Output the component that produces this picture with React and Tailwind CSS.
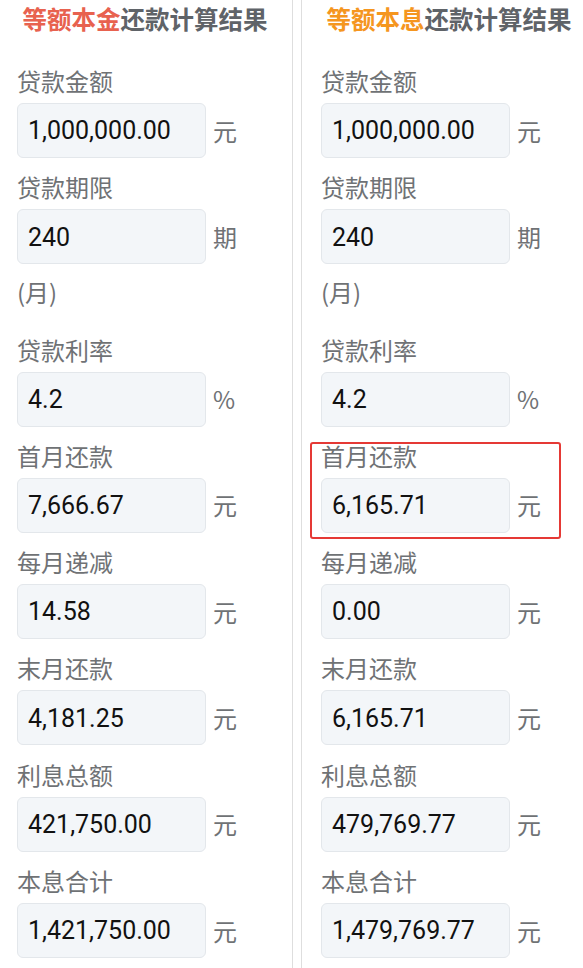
const left = {
  accent: "等额本金",
  color: "text-[#e8624f]",
  rows: [
    ["贷款金额", "1,000,000.00", "元"],
    ["贷款期限", "240", "期", "(月)"],
    ["贷款利率", "4.2", "%"],
    ["首月还款", "7,666.67", "元"],
    ["每月递减", "14.58", "元"],
    ["末月还款", "4,181.25", "元"],
    ["利息总额", "421,750.00", "元"],
    ["本息合计", "1,421,750.00", "元"],
  ],
};

const right = {
  accent: "等额本息",
  color: "text-[#f5961f]",
  highlight: "首月还款",
  rows: [
    ["贷款金额", "1,000,000.00", "元"],
    ["贷款期限", "240", "期", "(月)"],
    ["贷款利率", "4.2", "%"],
    ["首月还款", "6,165.71", "元"],
    ["每月递减", "0.00", "元"],
    ["末月还款", "6,165.71", "元"],
    ["利息总额", "479,769.77", "元"],
    ["本息合计", "1,479,769.77", "元"],
  ],
};

function Field({ label, value, unit, extra, highlight }) {
  return (
    <div className="relative pb-[14.3px]">
      {highlight && (
        <div className="absolute left-[-11px] top-[1px] w-[251px] h-[97px] border-2 border-[#e53935] rounded-[3px]" />
      )}
      <div className="h-[30px] leading-[30px] text-[24px] text-[#6f7275]">{label}</div>
      <div className="mt-[7px] flex items-center h-[55px]">
        <div className="w-[189px] h-[55px] flex items-center pl-[10px] pt-[1px] bg-[#f3f6f9] border border-[#e3e7eb] rounded-[6px] text-[25px] text-[#111] font-['Roboto',sans-serif]">
          {value}
        </div>
        <span className="ml-[7px] text-[24px] text-[#6f7275]">{unit}</span>
      </div>
      {extra && (
        <div className="h-[56px] flex items-center text-[24px] text-[#6f7275]">{extra}</div>
      )}
    </div>
  );
}

function Column({ data, className }) {
  return (
    <div className={`w-[295px] shrink-0 px-[19px] ${className}`}>
      <div className="h-[36px] leading-[38px] text-center text-[24.5px] font-bold text-[#5f6368] whitespace-nowrap">
        <span className={data.color}>{data.accent}</span>还款计算结果
      </div>
      <div className="pt-[30px]">
        {data.rows.map(([label, value, unit, extra]) => (
          <Field
            key={label}
            label={label}
            value={value}
            unit={unit}
            extra={extra}
            highlight={data.highlight === label}
          />
        ))}
      </div>
    </div>
  );
}

export default function App() {
  return (
    <div className="w-[583px] h-[968px] overflow-hidden bg-white font-['Noto_Sans_CJK_SC','Noto_Sans',sans-serif]">
      <div className="flex gap-[8px] ml-[-2px] h-full">
        <Column data={left} className="border-r border-[#dedede]" />
        <Column data={right} className="border-l border-[#dedede]" />
      </div>
    </div>
  );
}
